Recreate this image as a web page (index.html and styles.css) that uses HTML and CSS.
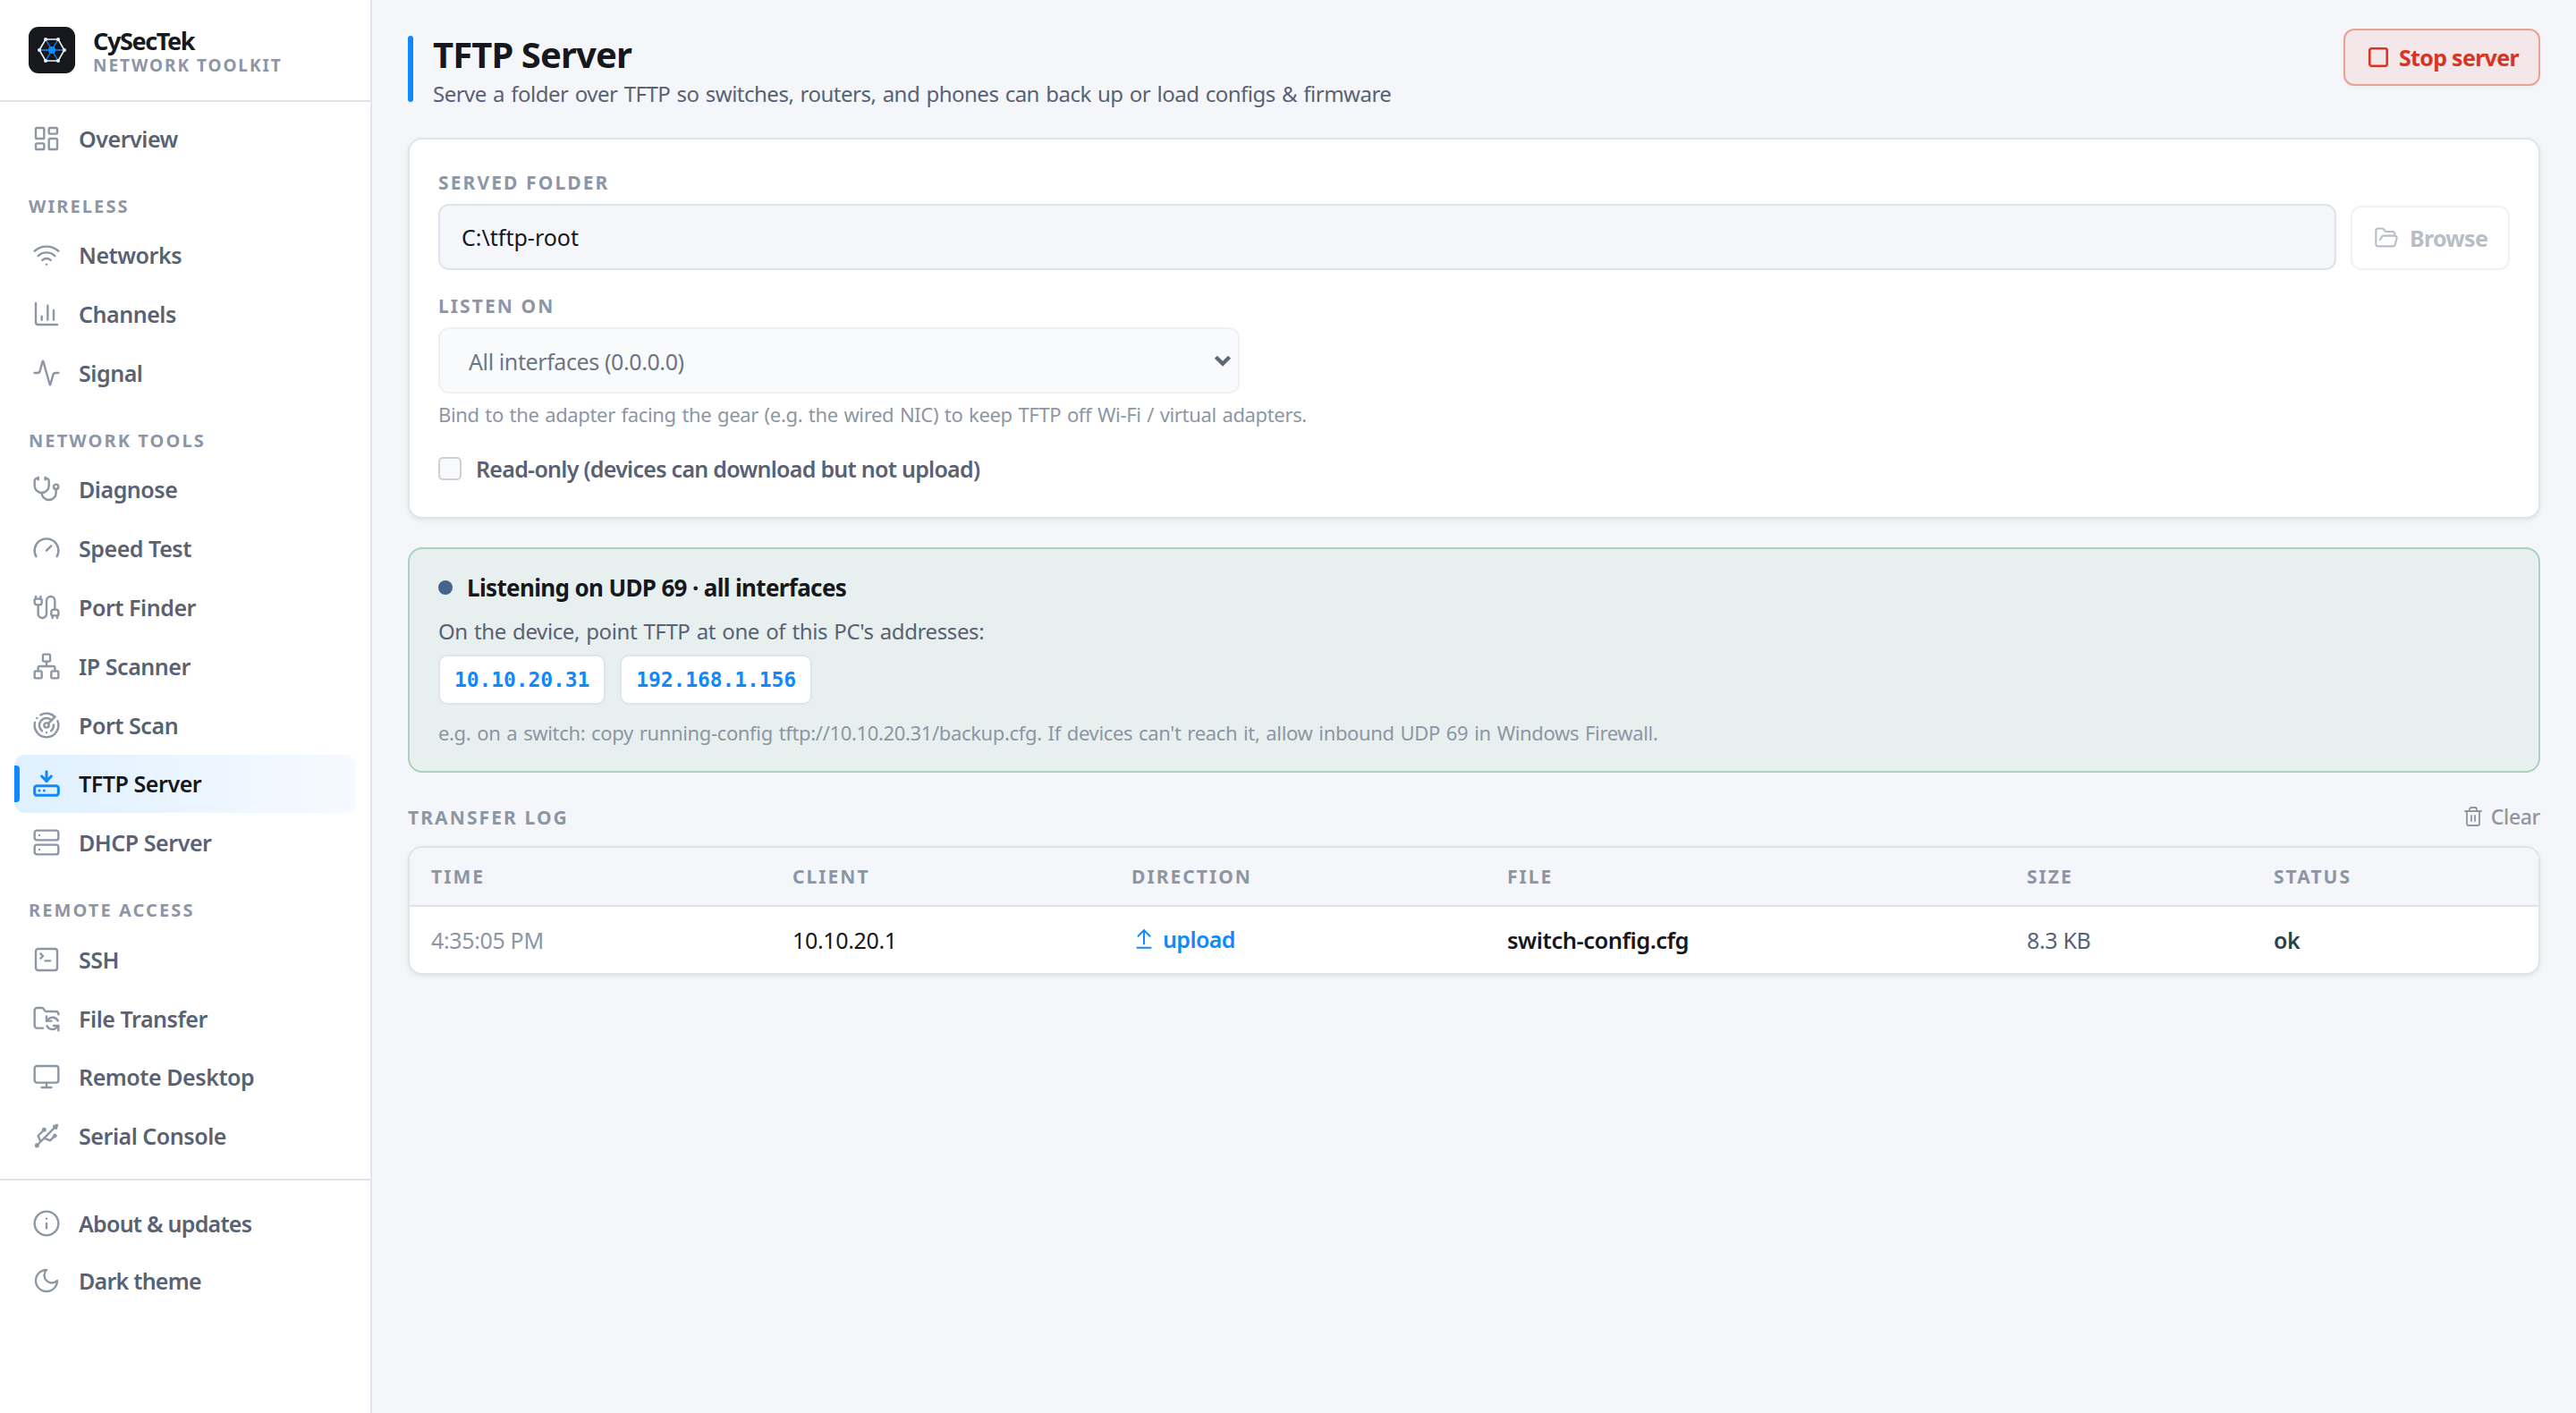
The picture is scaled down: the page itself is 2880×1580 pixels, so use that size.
FILE: index.html
```html
<!DOCTYPE html>
<html lang="en">
<head>
    <meta charset="UTF-8">
    <meta name="viewport" content="width=device-width, initial-scale=1.0">
    <title>CySecTek - TFTP Server</title>
    <link rel="stylesheet" href="styles.css">
</head>
<body>
    <div class="app">
        <aside class="sidebar">
            <div class="brand">
                <svg class="brand-logo" viewBox="0 0 52 52">
                    <rect width="52" height="52" rx="11" fill="#16181d"/>
                    <g stroke="#1089ff" stroke-width="1.3">
                        <path d="M12 26h28M19 14l14 24M33 14L19 38"/>
                    </g>
                    <path d="M12 26l7-12h14l7 12-7 12H19z" fill="none" stroke="#f0f2f5" stroke-width="1.6"/>
                    <g fill="#f0f2f5">
                        <circle cx="12" cy="26" r="2"/>
                        <circle cx="40" cy="26" r="2"/>
                        <circle cx="19" cy="14" r="2"/>
                        <circle cx="33" cy="14" r="2"/>
                        <circle cx="19" cy="38" r="2"/>
                        <circle cx="33" cy="38" r="2"/>
                    </g>
                    <circle cx="26" cy="26" r="4" fill="#1089ff"/>
                </svg>
                <div>
                    <div class="brand-name">CySecTek</div>
                    <div class="brand-sub">NETWORK TOOLKIT</div>
                </div>
            </div>

            <nav class="nav">
                <a class="nav-item">
                    <svg class="icon" viewBox="0 0 24 24"><rect width="7" height="9" x="3" y="3" rx="1"/><rect width="7" height="5" x="14" y="3" rx="1"/><rect width="7" height="9" x="14" y="12" rx="1"/><rect width="7" height="5" x="3" y="16" rx="1"/></svg>
                    Overview
                </a>

                <div class="nav-title">WIRELESS</div>
                <a class="nav-item">
                    <svg class="icon" viewBox="0 0 24 24"><path d="M12 20h.01"/><path d="M2 8.82a15 15 0 0 1 20 0"/><path d="M5 12.859a10 10 0 0 1 14 0"/><path d="M8.5 16.429a5 5 0 0 1 7 0"/></svg>
                    Networks
                </a>
                <a class="nav-item">
                    <svg class="icon" viewBox="0 0 24 24"><path d="M3 3v16a2 2 0 0 0 2 2h16"/><path d="M18 17V9"/><path d="M13 17V5"/><path d="M8 17v-3"/></svg>
                    Channels
                </a>
                <a class="nav-item">
                    <svg class="icon" viewBox="0 0 24 24"><path d="M22 12h-2.48a2 2 0 0 0-1.93 1.46l-2.35 8.36a.25.25 0 0 1-.48 0L9.24 2.18a.25.25 0 0 0-.48 0l-2.35 8.36A2 2 0 0 1 4.49 12H2"/></svg>
                    Signal
                </a>

                <div class="nav-title">NETWORK TOOLS</div>
                <a class="nav-item">
                    <svg class="icon" viewBox="0 0 24 24"><path d="M11 2v2"/><path d="M5 2v2"/><path d="M5 3H4a2 2 0 0 0-2 2v4a6 6 0 0 0 12 0V5a2 2 0 0 0-2-2h-1"/><path d="M8 15a6 6 0 0 0 12 0v-3"/><circle cx="20" cy="10" r="2"/></svg>
                    Diagnose
                </a>
                <a class="nav-item">
                    <svg class="icon" viewBox="0 0 24 24"><path d="m12 14 4-4"/><path d="M3.34 19a10 10 0 1 1 17.32 0"/></svg>
                    Speed Test
                </a>
                <a class="nav-item">
                    <svg class="icon" viewBox="0 0 24 24"><path d="M17 19a1 1 0 0 1-1-1v-2a2 2 0 0 1 2-2h2a2 2 0 0 1 2 2v2a1 1 0 0 1-1 1z"/><path d="M17 21v-2"/><path d="M19 14V6.5a1 1 0 0 0-7 0v11a1 1 0 0 1-7 0V10"/><path d="M21 21v-2"/><path d="M3 5V3"/><path d="M4 10a2 2 0 0 1-2-2V6a1 1 0 0 1 1-1h4a1 1 0 0 1 1 1v2a2 2 0 0 1-2 2z"/><path d="M7 5V3"/></svg>
                    Port Finder
                </a>
                <a class="nav-item">
                    <svg class="icon" viewBox="0 0 24 24"><rect x="16" y="16" width="6" height="6" rx="1"/><rect x="2" y="16" width="6" height="6" rx="1"/><rect x="9" y="2" width="6" height="6" rx="1"/><path d="M5 16v-3a1 1 0 0 1 1-1h12a1 1 0 0 1 1 1v3"/><path d="M12 12V8"/></svg>
                    IP Scanner
                </a>
                <a class="nav-item">
                    <svg class="icon" viewBox="0 0 24 24"><path d="M19.07 4.93A10 10 0 0 0 6.99 3.34"/><path d="M4 6h.01"/><path d="M2.29 9.62A10 10 0 1 0 21.31 8.35"/><path d="M16.24 7.76A6 6 0 1 0 8.23 16.67"/><path d="M12 18h.01"/><path d="M17.99 11.66A6 6 0 0 1 15.77 16.67"/><circle cx="12" cy="12" r="2"/><path d="m13.41 10.59 5.66-5.66"/></svg>
                    Port Scan
                </a>
                <a class="nav-item active">
                    <svg class="icon" viewBox="0 0 24 24"><path d="M12 2v8"/><path d="m16 6-4 4-4-4"/><rect width="20" height="8" x="2" y="14" rx="2"/><path d="M6 18h.01"/><path d="M10 18h.01"/></svg>
                    TFTP Server
                </a>
                <a class="nav-item">
                    <svg class="icon" viewBox="0 0 24 24"><rect width="20" height="8" x="2" y="2" rx="2"/><rect width="20" height="8" x="2" y="14" rx="2"/><path d="M6 6h.01"/><path d="M6 18h.01"/></svg>
                    DHCP Server
                </a>

                <div class="nav-title">REMOTE ACCESS</div>
                <a class="nav-item">
                    <svg class="icon" viewBox="0 0 24 24"><path d="m7 11 2-2-2-2"/><path d="M11 13h4"/><rect width="18" height="18" x="3" y="3" rx="2"/></svg>
                    SSH
                </a>
                <a class="nav-item">
                    <svg class="icon" viewBox="0 0 24 24"><path d="M9 20H4a2 2 0 0 1-2-2V5a2 2 0 0 1 2-2h3.9a2 2 0 0 1 1.69.9l.81 1.2a2 2 0 0 0 1.67.9H20a2 2 0 0 1 2 2v.5"/><path d="M12 10v4h4"/><path d="m12 14 1.535-1.605a5 5 0 0 1 8 1.5"/><path d="M22 22v-4h-4"/><path d="m22 18-1.535 1.605a5 5 0 0 1-8-1.5"/></svg>
                    File Transfer
                </a>
                <a class="nav-item">
                    <svg class="icon" viewBox="0 0 24 24"><rect width="20" height="14" x="2" y="3" rx="2"/><path d="M8 21h8"/><path d="M12 17v4"/></svg>
                    Remote Desktop
                </a>
                <a class="nav-item">
                    <svg class="icon" viewBox="0 0 24 24"><circle cx="10" cy="7" r="1"/><circle cx="4" cy="20" r="1"/><path d="M4.7 19.3 19 5"/><path d="m21 3-3 1 2 2Z"/><path d="M9.26 7.68 5 12l2 5"/><path d="m10 14 5 2 3.5-3.5"/><path d="m18 12 1-1 1 1-1 1Z"/></svg>
                    Serial Console
                </a>
            </nav>

            <div class="nav-footer">
                <a class="nav-item">
                    <svg class="icon" viewBox="0 0 24 24"><circle cx="12" cy="12" r="10"/><path d="M12 16v-4"/><path d="M12 8h.01"/></svg>
                    About &amp; updates
                </a>
                <a class="nav-item">
                    <svg class="icon" viewBox="0 0 24 24"><path d="M12 3a6 6 0 0 0 9 9 9 9 0 1 1-9-9Z"/></svg>
                    Dark theme
                </a>
            </div>
        </aside>

        <main class="main">
            <header class="page-header">
                <div class="page-accent"></div>
                <div class="page-heading">
                    <h1>TFTP Server</h1>
                    <p>Serve a folder over TFTP so switches, routers, and phones can back up or load configs &amp; firmware</p>
                </div>
                <button class="btn btn-stop">
                    <svg class="icon" viewBox="0 0 24 24"><rect width="18" height="18" x="3" y="3" rx="2"/></svg>
                    Stop server
                </button>
            </header>

            <section class="card settings">
                <div class="label">SERVED FOLDER</div>
                <div class="folder-row">
                    <input class="folder-input" type="text" value="C:\tftp-root" readonly>
                    <button class="btn btn-browse" disabled>
                        <svg class="icon" viewBox="0 0 24 24"><path d="m6 14 1.5-2.9A2 2 0 0 1 9.24 10H20a2 2 0 0 1 1.94 2.5l-1.54 6a2 2 0 0 1-1.95 1.5H4a2 2 0 0 1-2-2V5a2 2 0 0 1 2-2h3.9a2 2 0 0 1 1.69.9l.81 1.2a2 2 0 0 0 1.67.9H18a2 2 0 0 1 2 2v2"/></svg>
                        Browse
                    </button>
                </div>

                <div class="label listen-label">LISTEN ON</div>
                <div class="select">
                    <span>All interfaces (0.0.0.0)</span>
                    <svg class="chevron" viewBox="0 0 18 12"><path d="M2 2l7 7 7-7"/></svg>
                </div>
                <p class="hint">Bind to the adapter facing the gear (e.g. the wired NIC) to keep TFTP off Wi-Fi / virtual adapters.</p>

                <div class="check-row">
                    <span class="checkbox"></span>
                    <span>Read-only (devices can download but not upload)</span>
                </div>
            </section>

            <section class="status">
                <div class="status-title"><span class="dot"></span>Listening on UDP 69 · all interfaces</div>
                <p class="status-text">On the device, point TFTP at one of this PC's addresses:</p>
                <div class="chips">
                    <code class="chip">10.10.20.31</code>
                    <code class="chip">192.168.1.156</code>
                </div>
                <p class="status-hint">e.g. on a switch: copy running-config tftp://10.10.20.31/backup.cfg. If devices can't reach it, allow inbound UDP 69 in Windows Firewall.</p>
            </section>

            <div class="log-header">
                <div class="label">TRANSFER LOG</div>
                <a class="clear">
                    <svg class="icon" viewBox="0 0 24 24"><path d="M3 6h18"/><path d="M19 6v14a2 2 0 0 1-2 2H7a2 2 0 0 1-2-2V6"/><path d="M8 6V4a2 2 0 0 1 2-2h4a2 2 0 0 1 2 2v2"/><path d="M10 11v6"/><path d="M14 11v6"/></svg>
                    Clear
                </a>
            </div>

            <div class="card log">
                <table class="log-table">
                    <colgroup>
                        <col class="col-time">
                        <col class="col-client">
                        <col class="col-direction">
                        <col class="col-file">
                        <col class="col-size">
                        <col>
                    </colgroup>
                    <thead>
                        <tr>
                            <th>TIME</th>
                            <th>CLIENT</th>
                            <th>DIRECTION</th>
                            <th>FILE</th>
                            <th>SIZE</th>
                            <th>STATUS</th>
                        </tr>
                    </thead>
                    <tbody>
                        <tr>
                            <td class="time">4:35:05 PM</td>
                            <td>10.10.20.1</td>
                            <td>
                                <span class="upload">
                                    <svg class="icon" viewBox="0 0 24 24"><path d="m18 9-6-6-6 6"/><path d="M12 3v14"/><path d="M5 21h14"/></svg>
                                    upload
                                </span>
                            </td>
                            <td class="file">switch-config.cfg</td>
                            <td class="size">8.3 KB</td>
                            <td class="ok">ok</td>
                        </tr>
                    </tbody>
                </table>
            </div>
        </main>
    </div>
</body>
</html>
```
FILE: styles.css
```css
* {
    box-sizing: border-box;
}

body {
    margin: 0;
    background: #f4f6fa;
    color: #16181d;
    font-family: "Noto Sans", sans-serif;
    font-size: 25px;
    letter-spacing: -0.35px;
}

h1, p {
    margin: 0;
}

.app {
    display: flex;
    height: 1580px;
}

.icon {
    width: 32px;
    height: 32px;
    flex: none;
    fill: none;
    stroke: currentColor;
    stroke-width: 1.8;
    stroke-linecap: round;
    stroke-linejoin: round;
}

/* Sidebar */
.sidebar {
    width: 416px;
    flex: none;
    background: #fff;
    border-right: 2px solid #dfe4ee;
}

.brand {
    display: flex;
    align-items: flex-start;
    gap: 20px;
    height: 114px;
    padding: 30px 32px 0;
    border-bottom: 2px solid #dfe4ec;
}

.brand-logo {
    width: 52px;
    height: 52px;
}

.brand-name {
    font-size: 27px;
    font-weight: 700;
    line-height: 32px;
    letter-spacing: -1.4px;
}

.brand-sub {
    font-size: 19px;
    font-weight: 700;
    line-height: 23px;
    letter-spacing: 1.95px;
    color: #8d96a5;
}

.nav {
    padding: 8px 16px 15px;
}

.nav-item {
    display: flex;
    align-items: center;
    gap: 20px;
    height: 65.8px;
    padding: 0 20px;
    border-radius: 12px;
    font-weight: 600;
    letter-spacing: -0.45px;
    color: #596273;
}

.nav-item .icon {
    color: #8d96a5;
}

.nav-item.active {
    position: relative;
    background: linear-gradient(90deg, #dff0ff, #f6faff);
    color: #16181d;
}

.nav-item.active::before {
    content: "";
    position: absolute;
    left: 0;
    top: 12px;
    bottom: 12px;
    width: 6px;
    border-radius: 0 4px 4px 0;
    background: #1089ff;
}

.nav-item.active .icon {
    color: #1089ff;
    stroke-width: 2.3;
}

.nav-title {
    height: 64.7px;
    padding: 25px 16px 0;
    font-size: 20px;
    font-weight: 700;
    line-height: 36px;
    letter-spacing: 2.1px;
    color: #8d96a5;
}

.nav-footer {
    padding: 16px 16px 0;
    border-top: 2px solid #dfe4ec;
}

.nav-footer .nav-item {
    height: 64px;
    letter-spacing: -0.75px;
}

/* Main column */
.main {
    flex: 1;
    padding: 32px 40px 0;
}

.page-header {
    display: flex;
    align-items: flex-start;
    height: 122px;
}

.page-accent {
    width: 6px;
    height: 74px;
    margin: 8px 22px 0 0;
    border-radius: 3px;
    background: #1089ff;
}

.page-heading {
    flex: 1;
    padding-top: 8px;
}

.page-heading h1 {
    font-size: 40px;
    font-weight: 750;
    line-height: 41px;
    letter-spacing: -0.9px;
}

.page-heading p {
    font-size: 24px;
    line-height: 48px;
    letter-spacing: -0.5px;
    word-spacing: 1.5px;
    color: #596273;
}

.btn {
    display: flex;
    align-items: center;
    gap: 12px;
    padding: 0 24px;
    border: 2px solid #dfe4ec;
    border-radius: 12px;
    background: #fff;
    font-family: inherit;
    font-size: 25px;
    font-weight: 700;
    letter-spacing: -0.7px;
    white-space: nowrap;
}

.btn-stop {
    width: 220px;
    height: 64px;
    gap: 10px;
    border-color: #e8a294;
    background: #f3e7e9;
    color: #d93421;
    box-shadow: 0 2px 4px rgba(22, 24, 29, 0.03);
}

.btn-stop .icon {
    width: 26px;
    height: 26px;
    stroke-width: 2.4;
}

.btn-browse {
    width: 178px;
    height: 72px;
    border-color: #f0f2f7;
    color: #b8bec6;
}

.btn-browse .icon {
    width: 28px;
    height: 28px;
}

.card {
    background: #fff;
    border: 2px solid #dfe4ec;
    border-radius: 16px;
    box-shadow: 0 2px 5px rgba(22, 24, 29, 0.08);
}

.label {
    font-size: 21px;
    font-weight: 700;
    line-height: 32px;
    letter-spacing: 2.1px;
    color: #8d96a5;
}

.settings {
    height: 426px;
    padding: 32px;
}

.folder-row {
    display: flex;
    align-items: flex-end;
    gap: 16px;
    margin-top: 8px;
}

.folder-input {
    flex: 1;
    height: 74px;
    padding: 0 24px;
    border: 2px solid #dfe4ec;
    border-radius: 12px;
    background: #f4f6fa;
    color: #16181d;
    font-family: inherit;
    font-size: 25px;
    letter-spacing: 0;
    outline: none;
}

.listen-label {
    margin-top: 24px;
}

.select {
    display: flex;
    align-items: center;
    justify-content: space-between;
    width: 896px;
    height: 74px;
    margin-top: 8px;
    padding: 1px 7px 0 32px;
    border: 2px solid #edf0f5;
    border-radius: 12px;
    background: #f9fafc;
    letter-spacing: -0.4px;
    color: #6d7583;
}

.chevron {
    width: 20px;
    height: 13px;
    fill: none;
    stroke: #5f6775;
    stroke-width: 4;
}

.hint {
    margin-top: 8px;
    font-size: 22px;
    line-height: 31px;
    letter-spacing: -0.35px;
    word-spacing: 1.3px;
    color: #8d96a5;
}

.check-row {
    display: flex;
    align-items: center;
    gap: 16px;
    height: 44px;
    margin-top: 23px;
    font-weight: 600;
    letter-spacing: -0.72px;
    color: #596273;
}

.checkbox {
    width: 26px;
    height: 26px;
    border: 2px solid #cdd0d4;
    border-radius: 5px;
    background: #f8f9fa;
}

/* Listening status */
.status {
    height: 252px;
    margin-top: 32px;
    padding: 25px 32px;
    border: 2px solid #a8d2bb;
    border-radius: 16px;
    background: #e7f0ee;
}

.status-title {
    display: flex;
    align-items: center;
    gap: 16px;
    font-size: 26px;
    font-weight: 700;
    line-height: 36px;
    letter-spacing: -0.65px;
}

.dot {
    width: 16px;
    height: 16px;
    border-radius: 50%;
    background: #44668c;
}

.status-text {
    margin-top: 13px;
    font-size: 24px;
    line-height: 36px;
    letter-spacing: -0.4px;
    word-spacing: 1.4px;
    color: #596273;
}

.chips {
    display: flex;
    gap: 16px;
    margin-top: 8px;
}

.chip {
    height: 56px;
    padding: 0 16px;
    border: 2px solid #dfe4ec;
    border-radius: 10px;
    background: #fff;
    font: 700 23px/52px "DejaVu Sans Mono", monospace;
    letter-spacing: -0.1px;
    color: #1089ff;
}

.status-hint {
    margin-top: 14px;
    font-size: 22px;
    line-height: 35px;
    letter-spacing: -0.35px;
    word-spacing: 1.5px;
    color: #8d96a5;
}

/* Transfer log */
.log-header {
    display: flex;
    align-items: center;
    justify-content: space-between;
    height: 32px;
    margin: 34px 0 16px;
}

.clear {
    display: flex;
    align-items: center;
    gap: 8px;
    padding-bottom: 2px;
    font-size: 23px;
    font-weight: 500;
    color: #8d96a5;
}

.clear .icon {
    width: 24px;
    height: 24px;
}

.log {
    overflow: hidden;
}

.log-table {
    width: 100%;
    table-layout: fixed;
    border-collapse: collapse;
}

.col-time { width: 404px; }
.col-client { width: 379px; }
.col-direction { width: 420px; }
.col-file { width: 581px; }
.col-size { width: 276px; }

.log-table th {
    height: 65px;
    padding: 0 24px;
    border-bottom: 2px solid #dfe4ec;
    background: #f4f6fa;
    text-align: left;
    font-size: 21px;
    font-weight: 700;
    letter-spacing: 2.05px;
    color: #8d96a5;
}

.log-table td {
    height: 75px;
    padding: 0 24px;
}

.time {
    color: #8d96a5;
}

.upload {
    display: flex;
    align-items: center;
    gap: 8px;
    padding: 0 0 3px 1px;
    font-weight: 600;
    letter-spacing: -0.6px;
    color: #1089ff;
}

.upload .icon {
    width: 26px;
    height: 26px;
}

.file {
    font-size: 25.5px;
    font-weight: 600;
    letter-spacing: -0.48px;
}

.size {
    color: #596273;
}

.ok {
    font-weight: 600;
    color: #2f4147;
}
```
